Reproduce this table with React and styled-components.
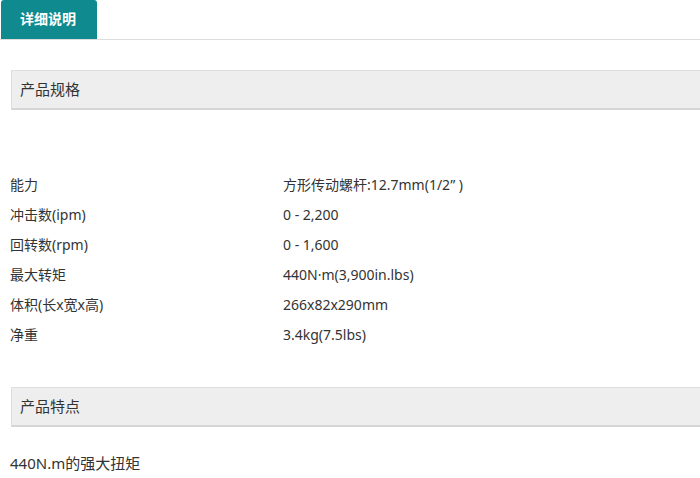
import React from 'react';
import styled, { createGlobalStyle } from 'styled-components';

const Global = createGlobalStyle`
  body {
    margin: 0;
    background: #fff;
    font-family: "Microsoft YaHei", "Noto Sans", "Noto Sans CJK SC", sans-serif;
    color: #333;
  }
`;

const Page = styled.div`
  width: 700px;
  overflow: hidden;
`;

const TabBar = styled.div`
  display: flex;
  height: 39px;
  border-bottom: 1px solid #ddd;
  padding-left: 1px;
`;

const Tab = styled.div`
  width: 96px;
  height: 39px;
  background: #0f8b8f;
  border-radius: 3px 3px 0 0;
  color: #fff;
  font-size: 14px;
  font-weight: bold;
  line-height: 38px;
  padding-left: 19px;
  box-sizing: border-box;
`;

const Body = styled.div`
  padding-left: 11px;
`;

const SectionHead = styled.div`
  margin-top: ${(p) => p.$top}px;
  height: 40px;
  box-sizing: border-box;
  background: #eeeeee;
  border: 1px solid #dedede;
  border-bottom: 2px solid #d6d6d6;
  border-right: none;
  padding-left: 8px;
  font-size: 15px;
  line-height: 37px;
  color: #333;
`;

const SpecTable = styled.div`
  margin-top: 60px;
  display: grid;
  grid-template-columns: 273px 1fr;
  margin-left: -1px;
`;

const Cell = styled.div`
  height: 30px;
  line-height: 30px;
  font-size: 14px;
  color: #333;
`;

const Feature = styled.div`
  margin-top: 26px;
  margin-left: -1px;
  font-size: 15px;
  line-height: 20px;
  color: #333;
`;

const specs = [
  ['能力', '方形传动螺杆:12.7mm(1/2” )'],
  ['冲击数(ipm)', '0 - 2,200'],
  ['回转数(rpm)', '0 - 1,600'],
  ['最大转矩', '440N·m(3,900in.lbs)'],
  ['体积(长x宽x高)', '266x82x290mm'],
  ['净重', '3.4kg(7.5lbs)'],
];

export default function App() {
  return (
    <Page>
      <Global />
      <TabBar>
        <Tab>详细说明</Tab>
      </TabBar>
      <Body>
        <SectionHead $top={30}>产品规格</SectionHead>
        <SpecTable>
          {specs.map(([k, v]) => (
            <React.Fragment key={k}>
              <Cell>{k}</Cell>
              <Cell>{v}</Cell>
            </React.Fragment>
          ))}
        </SpecTable>
        <SectionHead $top={37}>产品特点</SectionHead>
        <Feature>440N.m的强大扭矩</Feature>
      </Body>
    </Page>
  );
}
